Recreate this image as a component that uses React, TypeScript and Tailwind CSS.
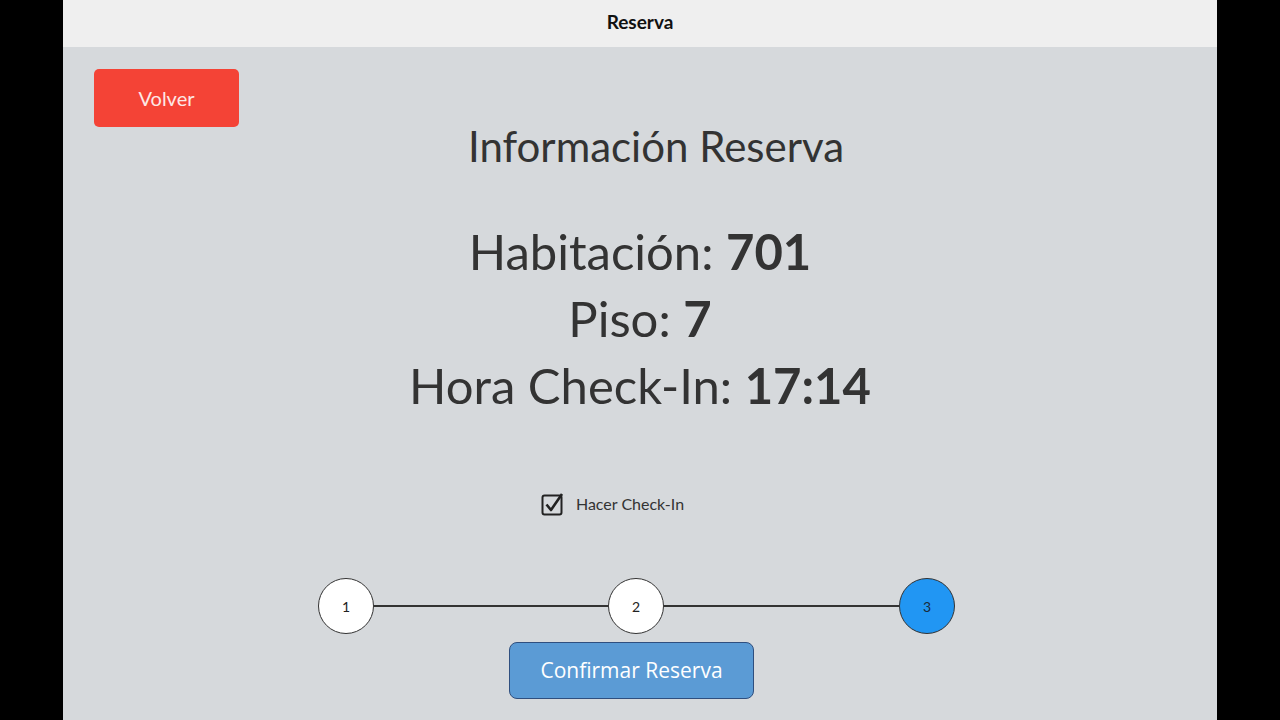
import React from "react";

function Step({ n, active }: { n: number; active?: boolean }) {
  return (
    <div
      className={`flex h-[56px] w-[56px] shrink-0 items-center justify-center rounded-full border-[1.5px] border-[#333] text-[14px] ${
        active ? "bg-[#2196f3] text-[#1a2a3a]" : "bg-white text-[#222]"
      }`}
    >
      {n}
    </div>
  );
}

export default function App() {
  return (
    <div className="flex h-[720px] w-[1280px] bg-black" style={{ fontFamily: "Lato, 'Open Sans', sans-serif" }}>
      <div className="ml-[63px] flex h-full w-[1154px] flex-col bg-[#d6d9dc]">
        <div className="flex h-[47px] shrink-0 items-center justify-center bg-[#efefef] pb-[3px] text-[19px] font-bold text-[#111]">
          Reserva
        </div>
        <div className="flex flex-1 flex-col">
          <div className="flex pl-[31px] pt-[22px]">
            <button className="flex h-[58px] w-[145px] items-center justify-center rounded-[5px] bg-[#f44336] text-[20px] text-[#fde8e6]">
              Volver
            </button>
          </div>
          <div className="-mt-[5px] flex justify-center pl-[32px] text-[42px] leading-[48px] text-[#333]">
            Información Reserva
          </div>
          <div className="mt-[48px] flex flex-col items-center text-[49px] leading-[67px] text-[#333]">
            <div>
              Habitación: <span className="font-bold">701</span>
            </div>
            <div>
              Piso: <span className="font-bold">7</span>
            </div>
            <div>
              Hora Check-In: <span className="font-bold">17:14</span>
            </div>
          </div>
          <div className="mt-[73px] flex items-center justify-center gap-[11px] pr-[55px]">
            <svg width="24" height="24" viewBox="0 0 24 24">
              <rect x="1.5" y="3.5" width="19" height="19" rx="2" fill="none" stroke="#222" strokeWidth="2" />
              <path d="M5.5 12.5 L10 18 L21 2" fill="none" stroke="#222" strokeWidth="2.6" strokeLinejoin="round" />
            </svg>
            <span className="text-[16px] text-[#333]">Hacer Check-In</span>
          </div>
          <div className="mt-[62px] flex items-center pl-[255px]">
            <Step n={1} />
            <div className="h-[2px] w-[234px] bg-[#333]" />
            <Step n={2} />
            <div className="h-[2px] w-[235px] bg-[#333]" />
            <Step n={3} active />
          </div>
          <div className="mt-[8px] flex pl-[446px]">
            <button
              className="flex h-[57px] w-[245px] items-center justify-center rounded-[8px] border border-[#2f4f7f] bg-[#5b9bd5] text-[21px] text-white"
              style={{ fontFamily: "'Open Sans', sans-serif" }}
            >
              Confirmar Reserva
            </button>
          </div>
        </div>
      </div>
    </div>
  );
}
